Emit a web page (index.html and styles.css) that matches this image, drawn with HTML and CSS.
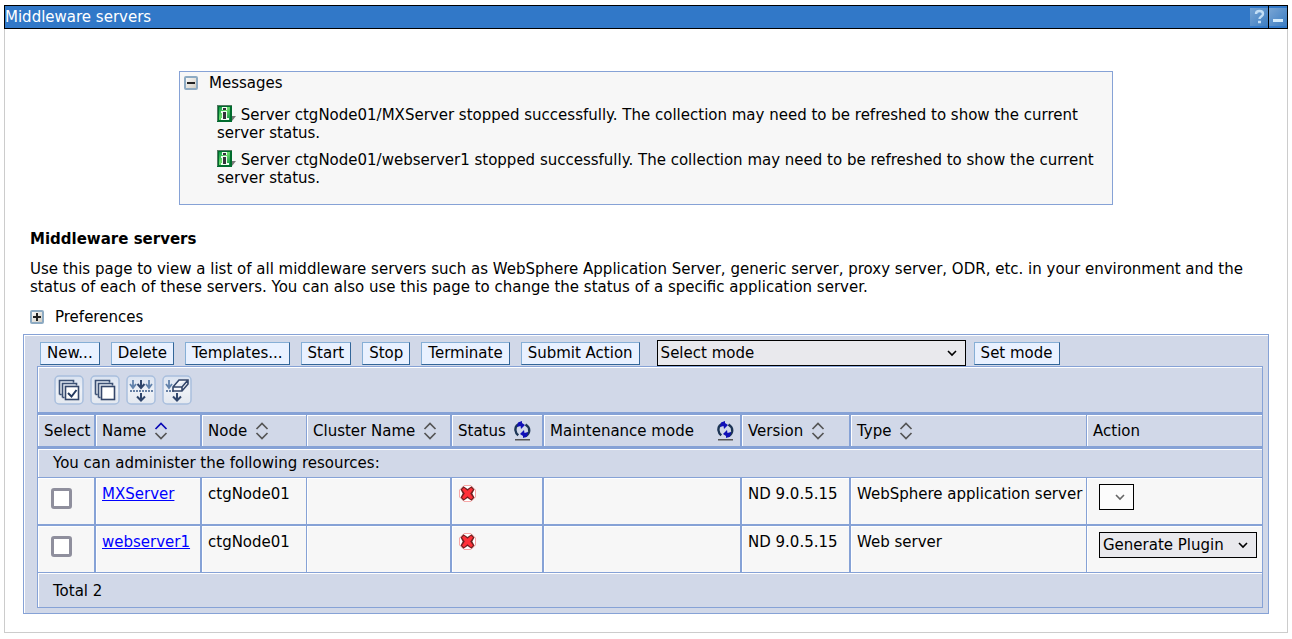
FILE: index.html
```html
<!DOCTYPE html>
<html lang="en">
<head>
<meta charset="utf-8">
<title>Middleware servers</title>
<link rel="stylesheet" href="styles.css">
</head>
<body>
<svg class="defs" aria-hidden="true">
  <defs>
    <linearGradient id="tile" x1="0" y1="0" x2="1" y2="1"><stop offset="0" stop-color="#fff"/><stop offset="1" stop-color="#ccc8bd"/></linearGradient>
    <linearGradient id="tool" x1="0" y1="0" x2="0" y2="1"><stop offset="0" stop-color="#d9e2f0"/><stop offset=".5" stop-color="#eef1f7"/><stop offset="1" stop-color="#e3e8f0"/></linearGradient>
    <linearGradient id="green" x1="0" y1="0" x2="1" y2="1"><stop offset="0" stop-color="#079345"/><stop offset=".45" stop-color="#6edc6c"/><stop offset="1" stop-color="#0a8b43"/></linearGradient>
    <linearGradient id="blue" x1="0" y1="0" x2="1" y2="1"><stop offset="0" stop-color="#79a5d4"/><stop offset="1" stop-color="#3c7dc2"/></linearGradient>
    <symbol id="info" viewBox="0 0 19 18">
      <path d="M15 11h4l-4 5z" fill="#777"/>
      <path d="M0 0h15v17H0z" fill="#006b2d"/><path d="M0 0h15v1H1v15H0z" fill="#557a62"/>
      <path d="M2 2h11v13H2z" fill="url(#green)"/>
      <path d="M5 2h5v3H5zM4 6h6v7h2v2H4v-2h1V8H4z" fill="#effff0"/>
      <path d="M6 3h3v2H6zM6 7h3v7H6z" fill="#34313b"/>
    </symbol>
    <symbol id="sort" viewBox="0 0 14 18">
      <path d="M1.500 7L7 1.500 12.500 7" fill="none" stroke-width="1.700"/>
      <path d="M1.500 11L7 16.500l5.500-5.500" fill="none" stroke="#555" stroke-width="1.700"/>
    </symbol>
    <symbol id="refresh" viewBox="0 0 17 20">
      <path d="M7 2.800C3 3.500 1 6 1.500 9.500c.2 2 1.200 3.600 2.800 4.800M11.500 3.500c3 1.800 4.200 4.500 3.500 7.500-.6 2.300-2 3.600-4.500 4.300" fill="none" stroke="#1c3555" stroke-width="2.400"/>
      <path d="M4 1.500L8 0v2l3 2-4 4-.5-3L3 6zM13 15.500L9 17v-2l-3-2 4-4 .5 3L14 11z" fill="#1010b8"/>
      <path d="M1 18h15v1.500H1z" fill="#555"/>
    </symbol>
    <symbol id="stopped" viewBox="0 0 17 17">
      <path d="M5 .5h7L16.500 5v7L12 16.500H5L.5 12V5z" fill="#fff" stroke="#f8a8a8"/>
      <path d="M1.500 4.500l3-3.200L8.500 4l4-2.700 3 3.200-2.200 4 2.200 4-3 3.200-4-2.700-4 2.700-3-3.200 2.200-4z" fill="#702020"/>
      <path d="M3 4.500L5 2.800l3.500 3 3.500-3 2 1.700-2.800 4 2.800 4-2 1.700-3.500-3-3.500 3-2-1.700 2.800-4z" fill="#ff3038"/>
    </symbol>
    <symbol id="chevron" viewBox="0 0 10 7"><path d="M1 1l4 4 4-4" fill="none" stroke="currentColor" stroke-width="1.600"/></symbol>
    <symbol id="stack" viewBox="0 0 30 30">
      <rect x="1" y="1" width="28" height="28" rx="4" fill="url(#tool)" stroke="#a9bfdd" stroke-width="1.500"/>
      <path d="M5.500 19.500v-14h14v2M5.500 19.500h2M8.500 22.500v-14h14v2M8.500 22.500h2" fill="none" stroke="#3b5074" stroke-width="1.600"/>
      <rect x="11.500" y="11.500" width="13" height="13" fill="#fff" stroke="#34466a" stroke-width="1.600"/>
    </symbol>
  </defs>
</svg>

<main class="portlet">
  <header class="titlebar">
    <h1>Middleware servers</h1>
    <button class="title-btn" type="button" aria-label="Help"><svg viewBox="0 0 18 18"><path d="M0 0h18v18H0z" fill="url(#blue)"/><path d="M6 6c0-4 7-4 7 0 0 2.500-3.500 2.500-3.500 5M8 14h3" fill="none" stroke="#c3def5" stroke-width="2.400"/></svg></button>
    <button class="title-btn" type="button" aria-label="Minimize"><svg viewBox="0 0 18 18"><path d="M0 0h18v18H0z" fill="url(#blue)"/><path d="M4 11h10v3H4z" fill="#d4ebfb"/></svg></button>
  </header>

  <div class="content">
    <section class="messages">
      <h2 class="toggle-line"><button class="toggle" type="button" aria-label="Collapse messages"><svg viewBox="0 0 14 14"><rect x="1" y="1" width="12" height="12" rx="1" fill="url(#tile)" stroke="#8daac2" stroke-width="2"/><path d="M3 6h8v2H3z" fill="#222"/></svg></button>Messages</h2>
      <p><svg class="info"><use href="#info"/></svg> Server ctgNode01/MXServer stopped successfully. The collection may need to be refreshed to show the current server status.</p>
      <p><svg class="info"><use href="#info"/></svg> Server ctgNode01/webserver1 stopped successfully. The collection may need to be refreshed to show the current server status.</p>
    </section>

    <section class="intro">
      <h2>Middleware servers</h2>
      <p>Use this page to view a list of all middleware servers such as WebSphere Application Server, generic server, proxy server, ODR, etc. in your environment and the status of each of these servers. You can also use this page to change the status of a specific application server.</p>
      <div class="toggle-line"><button class="toggle" type="button" aria-label="Expand preferences"><svg viewBox="0 0 14 14"><rect x="1" y="1" width="12" height="12" rx="1" fill="url(#tile)" stroke="#8daac2" stroke-width="2"/><path d="M3 6h3V3h2v3h3v2H8v3H6V8H3z" fill="#222"/></svg></button>Preferences</div>
    </section>

    <section class="collection">
      <div class="actions">
        <button class="btn" type="button">New...</button>
        <button class="btn" type="button">Delete</button>
        <button class="btn" type="button">Templates...</button>
        <button class="btn" type="button">Start</button>
        <button class="btn" type="button">Stop</button>
        <button class="btn" type="button">Terminate</button>
        <button class="btn" type="button">Submit Action</button>
        <div class="mode">
          <span class="select mode-select"><select aria-label="Select mode"><option>Select mode</option></select><svg><use href="#chevron"/></svg></span>
          <button class="btn" type="button">Set mode</button>
        </div>
      </div>

      <div class="grid">
        <div class="tools">
          <button type="button" aria-label="Select all"><svg viewBox="0 0 30 30"><use href="#stack"/><path d="M14 18l3.500 3.500 5-6.500" fill="none" stroke="#24395e" stroke-width="2"/></svg></button>
          <button type="button" aria-label="Deselect all"><svg viewBox="0 0 30 30"><use href="#stack"/></svg></button>
          <button type="button" aria-label="Show filter"><svg viewBox="0 0 30 30"><rect x="1" y="1" width="28" height="28" rx="4" fill="url(#tool)" stroke="#a9bfdd" stroke-width="1.500"/><path d="M7 5v8M4 9l3 4 3-4M23 5v8M20 9l3 4 3-4" fill="none" stroke="#6283ac" stroke-width="1.800"/><path d="M15 5v8M11.500 9l3.500 4 3.500-4M15 18v8M11 21.500l4 4 4-4" fill="none" stroke="#2f456b" stroke-width="2"/><path d="M4 16h23" stroke="#3d5c8a" stroke-width="1.500" stroke-dasharray="2 1"/></svg></button>
          <button type="button" aria-label="Clear filter"><svg viewBox="0 0 30 30"><rect x="1" y="1" width="28" height="28" rx="4" fill="url(#tool)" stroke="#a9bfdd" stroke-width="1.500"/><path d="M7 5v8M4 9l3 4 3-4" fill="none" stroke="#6283ac" stroke-width="1.800"/><path d="M4 16h8" stroke="#3d5c8a" stroke-width="1.500" stroke-dasharray="2 1"/><path d="M15 18v8M11 21.500l4 4 4-4" fill="none" stroke="#2f456b" stroke-width="2"/><path d="M11 12l6-7h9v4l-6 7h-9zM11 12h9l6-7M20 12v4" fill="#f7f8fb" stroke="#34466a" stroke-width="1.600"/></svg></button>
        </div>
        <table>
          <colgroup><col class="c-select"><col class="c-name"><col class="c-node"><col class="c-cluster"><col class="c-status"><col class="c-maint"><col class="c-version"><col><col class="c-action"></colgroup>
          <thead>
            <tr>
              <th scope="col">Select</th>
              <th scope="col"><span class="head sorted">Name<svg class="sort"><use href="#sort"/></svg></span></th>
              <th scope="col" class="thin"><span class="head">Node<svg class="sort"><use href="#sort"/></svg></span></th>
              <th scope="col"><span class="head">Cluster Name<svg class="sort"><use href="#sort"/></svg></span></th>
              <th scope="col"><span class="head">Status<svg class="refresh"><use href="#refresh"/></svg></span></th>
              <th scope="col"><span class="head spread">Maintenance mode<svg class="refresh"><use href="#refresh"/></svg></span></th>
              <th scope="col"><span class="head">Version<svg class="sort"><use href="#sort"/></svg></span></th>
              <th scope="col" class="thin"><span class="head">Type<svg class="sort"><use href="#sort"/></svg></span></th>
              <th scope="col">Action</th>
            </tr>
          </thead>
          <tbody>
            <tr class="note"><td colspan="9">You can administer the following resources:</td></tr>
            <tr class="server">
              <td class="check"><input type="checkbox" aria-label="Select MXServer"></td>
              <td><a href="#mxserver">MXServer</a></td>
              <td class="thin">ctgNode01</td>
              <td></td>
              <td><svg class="stopped" role="img" aria-label="Stopped"><use href="#stopped"/></svg></td>
              <td></td>
              <td>ND 9.0.5.15</td>
              <td class="thin">WebSphere application server</td>
              <td class="action"><span class="select empty"><select aria-label="Action for MXServer" disabled><option></option></select><svg><use href="#chevron"/></svg></span></td>
            </tr>
            <tr class="server last">
              <td class="check"><input type="checkbox" aria-label="Select webserver1"></td>
              <td><a href="#webserver1">webserver1</a></td>
              <td class="thin">ctgNode01</td>
              <td></td>
              <td><svg class="stopped" role="img" aria-label="Stopped"><use href="#stopped"/></svg></td>
              <td></td>
              <td>ND 9.0.5.15</td>
              <td class="thin">Web server</td>
              <td class="action"><span class="select plugin"><select aria-label="Action for webserver1"><option>Generate Plugin</option></select><svg><use href="#chevron"/></svg></span></td>
            </tr>
          </tbody>
          <tfoot><tr class="total"><td colspan="9">Total 2</td></tr></tfoot>
        </table>
      </div>
    </section>
  </div>
</main>
</body>
</html>
```
FILE: styles.css
```css
:root {
  --line: #86a2d6;
  --shade: #d1d8e8;
  --pale: #f7f7f7;
}

* { box-sizing: border-box; }

body {
  margin: 5px 4px;
  background: #fff;
  color: #000;
  font: 15px/18px Verdana, "DejaVu Sans", sans-serif;
}

h1, h2, p { margin: 0; font-size: inherit; font-weight: normal; }
button, select { font: inherit; color: inherit; }
svg { display: block; }
.defs { position: absolute; width: 0; height: 0; }

.titlebar {
  display: flex;
  align-items: center;
  height: 24px;
  border: 1px solid #000;
  background: #3178c8;
  color: #fff;
}
.titlebar h1 { flex: 1; }
.title-btn {
  height: 22px;
  padding: 2px 0;
  border: 0;
  background: none;
}
.title-btn + .title-btn { border-left: 1px solid #000; }
.title-btn svg { width: 18px; height: 18px; }

.content {
  padding: 42px 18px 18px;
  border: 1px solid #ccc;
  border-top: 0;
}

.messages {
  margin: 0 156px;
  padding: 2px 18px 17px 4px;
  border: 1px solid var(--line);
  background: var(--pale);
}
.messages h2 { margin-bottom: 14px; }
.messages p { margin-left: 33px; }
.messages p + p { margin-top: 9px; }
.info { display: inline-block; width: 19px; height: 18px; margin-top: -3px; vertical-align: -3px; }

.toggle-line { display: flex; align-items: center; gap: 11px; }
.toggle { padding: 0; border: 0; background: none; }
.toggle svg { width: 14px; height: 14px; }

.intro { padding: 25px 24px 8px 7px; }
.intro h2 { font-weight: bold; }
.intro p { margin: 12px 0; }

.collection {
  padding: 5px 5px 5px 13px;
  border: 1px solid var(--line);
  background: var(--shade);
  box-shadow: inset 1px 1px #fff;
}

.actions { display: flex; align-items: center; gap: 11px; padding-left: 3px; }
.mode { display: flex; align-items: center; gap: 8px; margin-left: 6px; }
.btn {
  height: 23px;
  padding: 0 6px;
  border: 1px solid;
  border-color: #86afd6 #336699 #336699 #86afd6;
  background: #e9f1ff;
  white-space: nowrap;
}

.select { display: grid; align-items: center; height: 26px; }
.select > * { grid-area: 1 / 1; }
.select select {
  width: 100%;
  height: 26px;
  padding: 0 3px;
  border: 1px solid #000;
  border-radius: 0;
  background: #e9e9ed;
  appearance: none;
}
.select svg { justify-self: end; width: 10px; height: 7px; margin-right: 9px; pointer-events: none; }
.mode-select { width: 309px; }
.plugin { width: 158px; }
.empty { width: 35px; color: #666; }
.empty select { background: #fcfcfc; opacity: 1; }

.grid { border: 1px solid var(--line); }
.tools {
  display: flex;
  gap: 6px;
  padding: 8px 16px 7px;
  border-bottom: 2px solid var(--line);
  box-shadow: inset 1px 1px #fff;
}
.tools button { padding: 0; border: 0; background: none; }
.tools svg { width: 30px; height: 30px; }

table { width: 100%; table-layout: fixed; border-collapse: separate; border-spacing: 0; }
.c-select { width: 58px; }
.c-name { width: 106px; }
.c-node { width: 105px; }
.c-cluster { width: 145px; }
.c-status { width: 92px; }
.c-maint { width: 198px; }
.c-version { width: 109px; }
.c-action { width: 175px; }

th, td {
  padding: 7px 6px;
  border: 0 solid var(--line);
  border-right-width: 2px;
  box-shadow: inset 1px 1px #fff;
  text-align: left;
  font-weight: normal;
  white-space: nowrap;
}
th { height: 35px; padding: 0 6px; border-top-width: 1px; border-bottom-width: 3px; }
.thin { border-right-width: 1px; }
tr > :last-child { border-right-width: 0; }

.head { display: flex; align-items: center; gap: 8px; }
.head.spread { justify-content: space-between; }
.sort { width: 14px; height: 18px; stroke: #555; }
.sorted .sort { stroke: #0909b5; }
.refresh { width: 17px; height: 20px; }

.note td { height: 29px; padding: 0 15px; border-bottom-width: 1px; }
.server td { height: 48px; border-bottom-width: 2px; background: var(--pale); vertical-align: top; }
.server.last td { height: 47px; border-bottom-width: 1px; }
.server .check { padding: 10px 13px; }
.server .action { padding: 6px 6px 6px 12px; }
.total td { height: 34px; padding: 2px 15px 0; }
.stopped { width: 17px; height: 17px; margin-left: 1px; }
a { color: #00f; }

input[type="checkbox"] {
  display: block;
  width: 21px;
  height: 21px;
  margin: 0;
  border: 3px solid #8f8f9d;
  border-radius: 3px;
  background: #fff;
  appearance: none;
}
```
